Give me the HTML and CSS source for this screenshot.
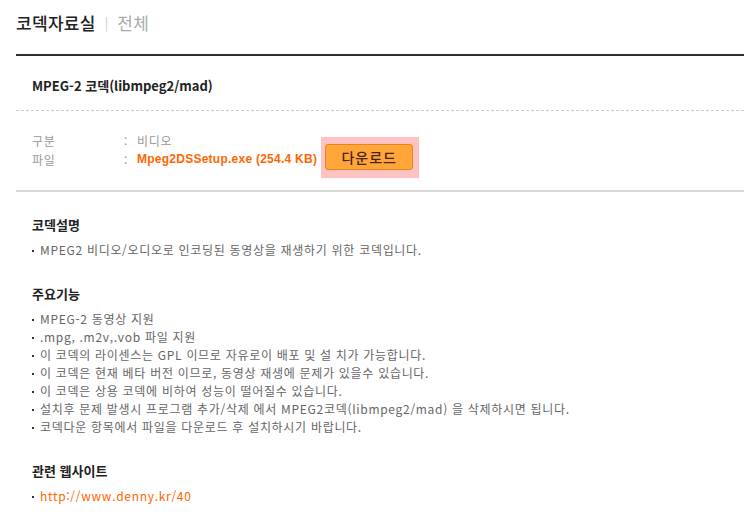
FILE: index.html
```html
<!DOCTYPE html>
<html lang="ko">
<head>
<meta charset="utf-8">
<title>코덱자료실</title>
<link rel="stylesheet" href="styles.css">
</head>
<body>
<div class="page">
  <div class="page-head">
    <span class="head-title">코덱자료실</span><span class="head-sep">|</span><span class="head-sub">전체</span>
  </div>
  <div class="post-title">MPEG-2 코덱(libmpeg2/mad)</div>
  <div class="info">
    <div class="info-row">
      <span class="info-label">구분</span><span class="info-colon">:</span><span class="info-value">비디오</span>
    </div>
    <div class="info-row">
      <span class="info-label">파일</span><span class="info-colon">:</span>
      <span class="info-value file">
        <a class="file-link" href="#">Mpeg2DSSetup.exe (254.4 KB)</a>
        <span class="btn-wrap"><button class="btn-download" type="button">다운로드</button></span>
      </span>
    </div>
  </div>
  <div class="content">
    <h3 class="sec-title">코덱설명</h3>
    <ul class="sec-list">
      <li>MPEG2 비디오/오디오로 인코딩된 동영상을 재생하기 위한 코덱입니다.</li>
    </ul>
    <h3 class="sec-title">주요기능</h3>
    <ul class="sec-list">
      <li>MPEG-2 동영상 지원</li>
      <li>.mpg, .m2v,.vob 파일 지원</li>
      <li>이 코덱의 라이센스는 GPL 이므로 자유로이 배포 및 설 치가 가능합니다.</li>
      <li>이 코덱은 현재 베타 버전 이므로, 동영상 재생에 문제가 있을수 있습니다.</li>
      <li>이 코덱은 상용 코덱에 비하여 성능이 떨어질수 있습니다.</li>
      <li>설치후 문제 발생시 프로그램 추가/삭제 에서 MPEG2코덱(libmpeg2/mad) 을 삭제하시면 됩니다.</li>
      <li>코덱다운 항목에서 파일을 다운로드 후 설치하시기 바랍니다.</li>
    </ul>
    <h3 class="sec-title">관련 웹사이트</h3>
    <ul class="sec-list">
      <li><a class="site-link" href="#">http://www.denny.kr/40</a></li>
    </ul>
  </div>
</div>
</body>
</html>
```

FILE: styles.css
```css
html, body {
  margin: 0;
  padding: 0;
  background: #fff;
}
body {
  font-family: "Noto Sans CJK KR", "Noto Sans", sans-serif;
  font-size: 12px;
  color: #666;
}
.page {
  width: 728px;
  margin-left: 16px;
}
.page-head {
  height: 56px;
  box-sizing: border-box;
  padding-top: 12px;
  line-height: 22px;
  border-bottom: 2px solid #2e2e2e;
  display: flex;
  align-items: flex-start;
}
.head-title {
  font-size: 17px;
  font-weight: 500;
  color: #222;
  letter-spacing: 0.3px;
}
.head-sep {
  font-size: 13px;
  color: #ccc;
  margin: 0 9px 0 9px;
}
.head-sub {
  font-size: 17px;
  color: #aaa;
  letter-spacing: 0.5px;
}
.post-title {
  padding: 21px 16px 15px;
  line-height: 18px;
  font-size: 13px;
  font-weight: 700;
  color: #222;
  border-bottom: 1px dashed #ccc;
}
.info {
  padding: 20px 16px 21px;
  border-bottom: 2px solid #d8d8d8;
}
.info-row {
  display: flex;
  align-items: center;
  height: 19px;
  line-height: 19px;
}
.info-label {
  width: 92px;
  color: #999;
  letter-spacing: 0.7px;
}
.info-colon {
  width: 13px;
  color: #999;
}
.info-value {
  color: #999;
  letter-spacing: 0.7px;
}
.info-value.file {
  display: flex;
  align-items: center;
  letter-spacing: 0;
}
.file-link {
  font-family: "Liberation Sans", Arial, sans-serif;
  font-weight: 700;
  color: #ff6600;
  text-decoration: none;
  letter-spacing: 0.25px;
}
.btn-wrap {
  display: block;
  margin: -13px 0 -9px 4px;
  padding: 7px 6px 8px 4px;
  background: #ffc2c2;
}
.btn-download {
  display: block;
  width: 88px;
  height: 26px;
  padding: 0;
  border: 1px solid #e08a1c;
  border-radius: 3px;
  background: #ffa53a;
  color: #4a2412;
  font-family: "Noto Sans CJK KR", sans-serif;
  font-size: 14px;
  font-weight: 500;
  letter-spacing: 1px;
  line-height: 24px;
  cursor: pointer;
}
.content {
  padding: 0 16px;
}
.sec-title {
  margin: 26px 0 7px;
  font-size: 13px;
  font-weight: 700;
  line-height: 18px;
  color: #222;
}
.sec-title:first-child {
  margin-top: 24px;
}
.sec-list {
  list-style: none;
  margin: 0;
  padding: 0;
}
.sec-list li {
  position: relative;
  padding-left: 8px;
  line-height: 18px;
  color: #666;
  letter-spacing: 0.7px;
}
.sec-list li::before {
  content: "";
  position: absolute;
  left: 0;
  top: 9px;
  width: 2px;
  height: 2px;
  background: #333;
}
.site-link {
  color: #ff6600;
  text-decoration: none;
}
```
